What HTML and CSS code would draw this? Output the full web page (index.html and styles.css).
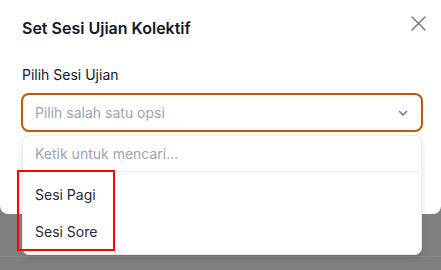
FILE: index.html
```html
<!DOCTYPE html>
<html lang="id">
<head>
<meta charset="utf-8">
<link rel="stylesheet" href="styles.css">
</head>
<body>
<div class="backdrop">
  <div class="modal">
    <div class="modal-header">
      <h2 class="title">Set Sesi Ujian Kolektif</h2>
      <button class="close" aria-label="Tutup">
        <svg width="15" height="15" viewBox="0 0 15 15"><path d="M1 1 L14 14 M14 1 L1 14" stroke="#6b7280" stroke-width="1.4" stroke-linecap="round" fill="none"/></svg>
      </button>
    </div>
    <label class="label">Pilih Sesi Ujian</label>
    <div class="field">
      <div class="select">
        <span class="placeholder">Pilih salah satu opsi</span>
        <svg class="chevron" width="12" height="12" viewBox="0 0 12 12"><path d="M2.5 4.5 L6 8 L9.5 4.5" stroke="#6b7280" stroke-width="1.5" fill="none" stroke-linecap="round" stroke-linejoin="round"/></svg>
      </div>
      <div class="dropdown">
        <div class="search">Ketik untuk mencari...</div>
        <ul class="options">
          <li class="option">Sesi Pagi</li>
          <li class="option">Sesi Sore</li>
        </ul>
      </div>
      <div class="highlight"></div>
    </div>
  </div>
  <div class="under-line"></div>
</div>
</body>
</html>
```

FILE: styles.css
```css
* { box-sizing: border-box; }
html, body {
  margin: 0;
  padding: 0;
  width: 441px;
  height: 270px;
  overflow: hidden;
  font-family: Inter, "Noto Sans", sans-serif;
}
.backdrop {
  background: #7f7f7f;
  height: 270px;
  position: relative;
}
.under-line {
  position: absolute;
  left: 0;
  right: 0;
  top: 256px;
  height: 1px;
  background: #8a8a8a;
}
.modal {
  background: #fff;
  height: 214px;
  border-radius: 0 0 8px 8px;
  padding: 16px 15px 0 22px;
  position: relative;
  z-index: 1;
}
.modal-header {
  display: flex;
  justify-content: space-between;
  align-items: flex-start;
}
.title {
  margin: 0;
  font-size: 16px;
  line-height: 24px;
  font-weight: 600;
  color: #111827;
}
.close {
  border: 0;
  background: none;
  padding: 0;
  margin-top: 0;
  width: 15px;
  height: 15px;
  display: flex;
}
.label {
  display: block;
  margin-top: 25px;
  font-size: 14px;
  line-height: 20px;
  color: #111827;
}
.field {
  position: relative;
  margin-top: 8px;
  margin-left: -1px;
  margin-right: 3px;
}
.select {
  height: 39px;
  border: 2px solid #c2570c;
  border-radius: 8px;
  display: flex;
  align-items: center;
  justify-content: space-between;
  padding: 0 12px 0 12px;
}
.placeholder {
  font-size: 14px;
  color: #9ca3af;
}
.dropdown {
  position: absolute;
  top: 42px;
  left: 1px;
  right: 1px;
  background: #fff;
  border: 1px solid #ececec;
  border-radius: 7px;
  box-shadow: 0 3px 6px rgba(0,0,0,0.12);
}
.search {
  height: 36px;
  padding: 0 12px;
  display: flex;
  align-items: center;
  font-size: 14px;
  color: #9ca3af;
  border-bottom: 1px solid #eeeeee;
}
.options {
  list-style: none;
  margin: 0;
  padding: 4px 0;
}
.option {
  height: 37px;
  display: flex;
  align-items: center;
  padding: 0 12px;
  font-size: 14px;
  color: #1f2937;
}
.highlight {
  position: absolute;
  left: -4px;
  top: 77px;
  width: 98px;
  height: 81px;
  border: 2px solid #ff0000;
  pointer-events: none;
}
```
